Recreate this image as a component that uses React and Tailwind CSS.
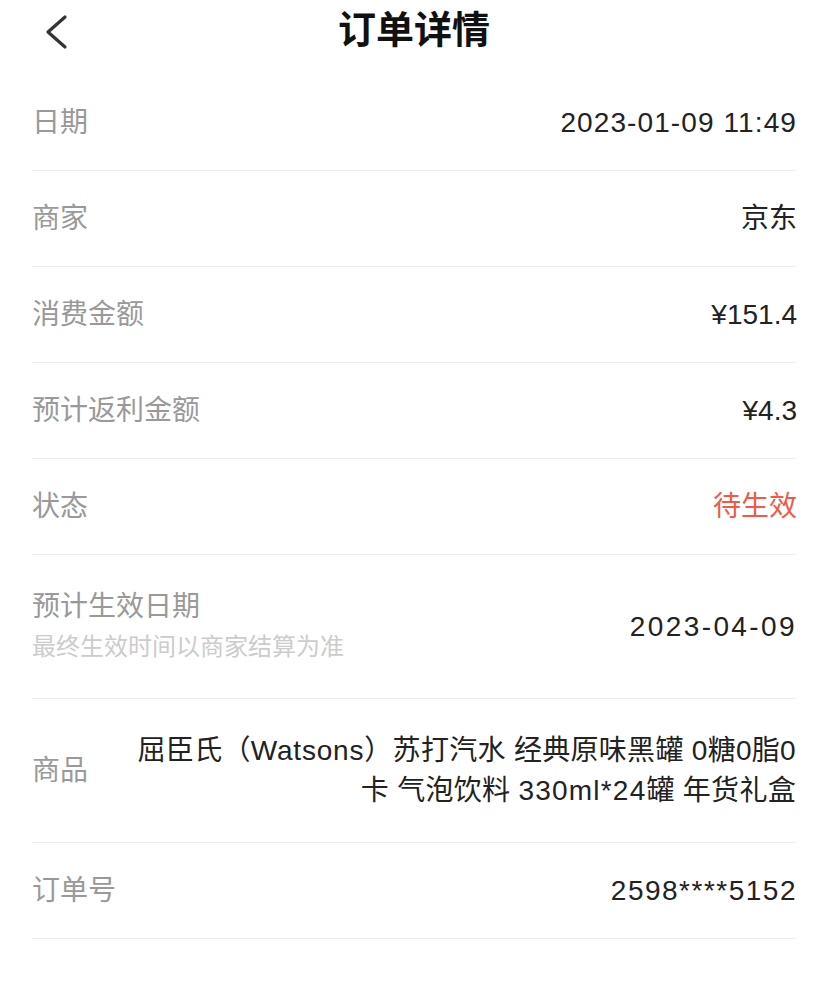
const font = {
  fontFamily: '"Liberation Sans", "Noto Sans CJK SC", sans-serif',
};

const rows = [
  { label: '日期', value: '2023-01-09 11:49', track: 'tracking-[1.1px]' },
  { label: '商家', value: '京东' },
  { label: '消费金额', value: '¥151.4' },
  { label: '预计返利金额', value: '¥4.3' },
  { label: '状态', value: '待生效', red: true },
];

function Row({ label, sub, value, red, tall, track, children }) {
  return (
    <div
      className={`flex items-center justify-between border-b border-[#ededed] ${
        tall ? 'h-[144px]' : 'h-[96px]'
      }`}
    >
      <div className="flex flex-col shrink-0">
        <span className="text-[28px] leading-[40px] text-[#999999]">{label}</span>
        {sub && <span className="text-[24px] leading-[40px] text-[#cccccc]">{sub}</span>}
      </div>
      {children || (
        <span
          className={`text-[28px] leading-[40px] -mr-[1px] ${track || ''} ${
            red ? 'text-[#f05a46]' : 'text-[#222222]'
          }`}
        >
          {value}
        </span>
      )}
    </div>
  );
}

export default function App() {
  return (
    <div className="min-h-[989px] bg-white" style={font}>
      <div className="relative h-[60px] flex items-center justify-center">
        <button className="absolute left-[40px] top-[12px] w-[32px] h-[40px] flex items-center justify-center">
          <svg width="32" height="40" viewBox="0 0 32 40" fill="none">
            <path d="M25 5 L8 20 L25 35" stroke="#333333" strokeWidth="3.2" strokeLinecap="round" strokeLinejoin="round" />
          </svg>
        </button>
        <h1 className="text-[38px] font-bold text-[#111111] leading-none">订单详情</h1>
      </div>

      <div className="px-[32px] pt-[15px]">
        {rows.map((r) => (
          <Row key={r.label} {...r} />
        ))}
        <Row
          label="预计生效日期"
          sub="最终生效时间以商家结算为准"
          value="2023-04-09"
          track="tracking-[2.4px]"
          tall
        />
        <Row label="商品" tall>
          <p className="w-[672px] text-right text-[28px] leading-[40px] text-[#222222] tracking-[0.3px]">
            屈臣氏（<span className="tracking-[0.8px]">Watsons</span>）苏打汽水 经典原味黑罐 0糖0脂0卡 气泡饮料{' '}
            <span className="tracking-[1.2px]">330ml*24</span>罐 年货礼盒
          </p>
        </Row>
        <Row label="订单号" value="2598****5152" track="tracking-[1.5px]" />
      </div>
    </div>
  );
}
